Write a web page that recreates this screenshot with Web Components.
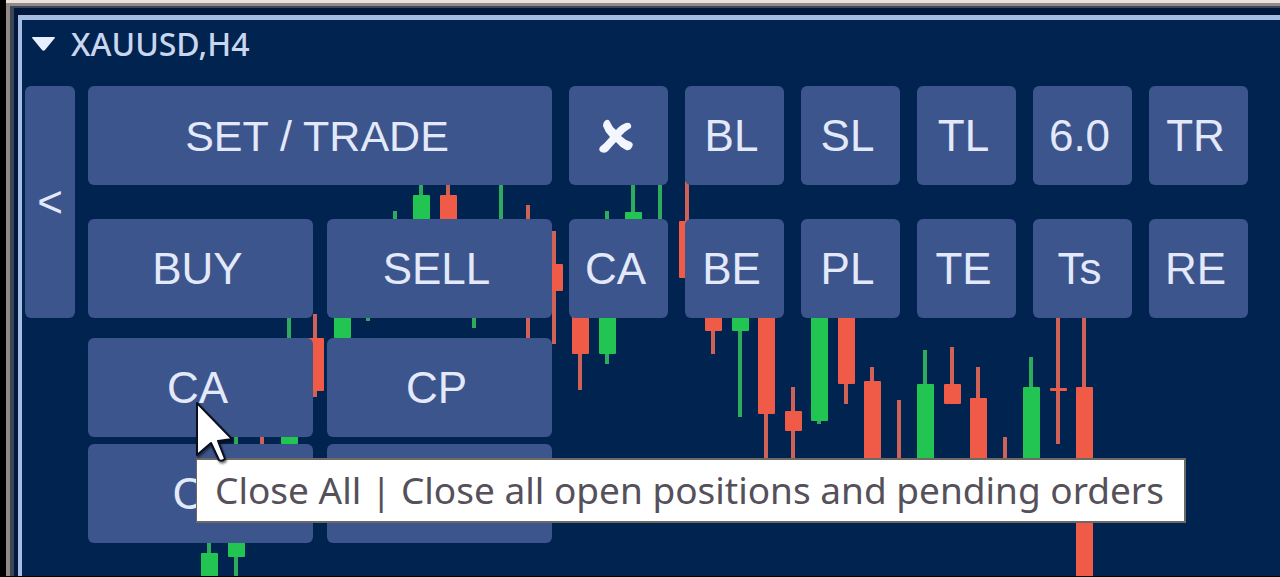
<!DOCTYPE html>
<html lang="en">
<head>
<meta charset="utf-8">
<title>XAUUSD,H4</title>
<style>
  html, body { margin: 0; height: 100%; background: #000; }
  body { overflow: hidden; font-family: "Liberation Sans", Arial, sans-serif; }
</style>
</head>
<body>
<chart-window heading="XAUUSD,H4">
  <candle-chart slot="chart"></candle-chart>
  <trade-panel></trade-panel>
  <tool-tip slot="overlay">Close All | Close all open positions and pending orders</tool-tip>
  <mouse-pointer slot="overlay"></mouse-pointer>
</chart-window>

<script>
class BaseElement extends HTMLElement {
  render(html) {
    this.attachShadow({ mode: "open" }).innerHTML = html;
  }
}

customElements.define("chart-window", class extends BaseElement {
  connectedCallback() {
    this.render(`
      <style>
        :host { display: block; position: relative; height: 100vh; overflow: hidden; box-sizing: border-box; padding: 0 0 1px 6px; background: #000; }
        .lip, .bevel, .inner, .pane { box-sizing: border-box; height: 100%; }
        .lip { background: #ebe2df; padding-top: 3px; }
        .bevel { border: solid #928a86; border-width: 3px 0 0 4px; }
        .inner { background: #00183d; border: solid #3c4654; border-width: 2px 0 0 4px; padding: 7px 0 0 4px; }
        .pane { background: #00234f; border: solid #a7bce3; border-width: 5px 0 0 4px; }
        header { position: relative; display: flex; align-items: center; gap: 16px; height: 48px; padding: 0 0 18px 10px; color: #c9d6ee; }
        h1 { margin: 0; font: 500 32px/48px "Noto Sans", sans-serif; }
        button { border: 0; padding: 0; background: none; display: flex; }
        main { position: relative; }
      </style>
      <div class="lip"><div class="bevel"><div class="inner"><div class="pane">
        <slot name="chart"></slot>
        <header>
          <button aria-label="Chart menu"><svg width="23" height="14" viewBox="0 0 23 14"><path d="M1 0H22Q24 0 22 2L13 13Q11.500 14.500 10 13L1 2Q-1 0 1 0Z" fill="#e8efff"/></svg></button>
          <h1></h1>
        </header>
        <main><slot></slot></main>
      </div></div></div></div>
      <slot name="overlay"></slot>`);
    this.shadowRoot.querySelector("h1").textContent = this.getAttribute("heading");
  }
});

customElements.define("candle-chart", class extends BaseElement {
  connectedCallback() {
    // centre, direction, high, low, body top, body bottom
    const data = [
      [209,1,540,577,553,577],[236,1,430,577,500,557],[262,0,430,450,0,0],[289,1,310,445,380,444],
      [315,0,314,397,338,391],[342,1,300,338,310,338],[368,1,300,321,0,0],[395,1,211,230,0,0],
      [421,1,180,230,195,225],[448,0,180,230,195,225],[474,1,300,328,0,0],[501,1,180,230,0,0],
      [528,0,205,345,0,0],[554,0,231,344,264,291],[580,0,310,390,310,354],[607,1,211,364,310,354],
      [633,1,180,230,212,230],[660,1,180,230,0,0],[687,0,181,278,221,278],[713,0,310,354,310,331],
      [740,1,310,417,310,331],[766,0,310,470,310,414],[793,0,387,470,411,431],[819,1,310,424,310,421],
      [846,0,310,404,310,384],[872,0,367,480,381,480],[899,0,400,480,0,0],[925,1,350,480,384,480],
      [952,0,347,404,384,404],[978,0,367,480,398,480],[1005,0,437,480,0,0],[1031,1,357,480,387,480],
      [1058,0,310,444,388,391],[1084,0,310,577,387,577]
    ];
    const bars = data.map(([x, up, hi, lo, t, b]) =>
      `<rect x="${x - 2}" y="${hi}" width="4" height="${lo - hi}" fill="${up ? "#2eac5c" : "#cf6157"}"/>` +
      (b ? `<rect x="${x - 8}" y="${t}" width="17" height="${b - t}" rx="1" fill="${up ? "#23c552" : "#f05b48"}"/>` : "")).join("");
    this.render(`
      <style>
        :host { position: absolute; inset: 0 0 1px 0; overflow: hidden; }
        svg { display: block; overflow: visible; }
      </style>
      <svg width="1280" height="577" role="img" aria-label="Candlestick chart">${bars}</svg>`);
  }
});

customElements.define("trade-button", class extends BaseElement {
  connectedCallback() {
    this.render(`
      <style>
        :host { display: block; min-width: 0; height: 99px; }
        :host([wide]) { grid-column: 1 / -1; }
        :host([tab]) { height: 232px; }
        button { display: flex; align-items: center; justify-content: center; box-sizing: border-box; width: 100%; height: 100%; border: 0; border-radius: 6px; padding: 0 6px 0 0; background: #3c558c; color: #e3e9fa; font: 400 44px/50px "Liberation Sans", Arial, sans-serif; white-space: nowrap; }
        :host([wide]) button { font-size: 43px; }
        :host([tab]) button { padding: 0; font-size: 44px; }
        :host([covered]) button { padding-right: 24px; }
      </style>
      <button><slot></slot></button>`);
    const label = this.getAttribute("label");
    if (label) this.shadowRoot.querySelector("button").setAttribute("aria-label", label);
  }
});

customElements.define("trade-panel", class extends BaseElement {
  connectedCallback() {
    const tiles = list => list.map(t => `<trade-button>${t}</trade-button>`).join("");
    const cross = `<svg width="34" height="34" viewBox="0 0 34 34" style="display:block" aria-hidden="true"><path d="M7 1Q10 0 11 3Q13 8 17 11Q21 6 27 4Q31 3 32 6Q33 9 30 10Q25 13 22 17Q26 21 32 23Q35 25 33 28Q31 32 27 31Q21 28 17 23Q13 27 9 32Q6 35 2 33Q-1 31 1 28Q6 24 11 18Q6 13 4 7Q4 3 7 1Z" fill="#f3f5ff"/></svg>`;
    this.render(`
      <style>
        :host { display: flex; align-items: flex-start; padding: 0 32px 0 3px; }
        .tab { flex: none; width: 50px; margin-right: 13px; }
        .orders { flex: 464 1 0; min-width: 0; display: flex; flex-direction: column; gap: 20px; margin-right: 17px; }
        .pair { display: grid; grid-template-columns: 1fr 1fr; gap: 34px 14px; }
        .pair.close { row-gap: 7px; }
        .tools { flex: 679 1 0; min-width: 0; display: grid; grid-template-columns: repeat(6, 1fr); gap: 34px 17px; }
      </style>
      <trade-button tab class="tab" label="Collapse">&lt;</trade-button>
      <div class="orders">
        <div class="pair"><trade-button wide>SET / TRADE</trade-button>${tiles(["BUY", "SELL"])}</div>
        <div class="pair close">${tiles(["CA", "CP"])}<trade-button covered>C</trade-button><trade-button></trade-button></div>
      </div>
      <div class="tools">
        <trade-button label="Close">${cross}</trade-button>${tiles(["BL", "SL", "TL", "6.0", "TR", "CA", "BE", "PL", "TE", "Ts", "RE"])}
      </div>`);
  }
});

customElements.define("tool-tip", class extends BaseElement {
  connectedCallback() {
    this.setAttribute("role", "tooltip");
    this.render(`
      <style>
        :host { position: absolute; left: 196px; top: 458px; box-sizing: border-box; height: 65px; padding: 0 20px 0 18px; border: 2px solid #6d6a66; border-left-width: 1px; background: #fff; color: #55505a; font: 400 37px/60px "Noto Sans", sans-serif; white-space: nowrap; }
      </style>
      <slot></slot>`);
  }
});

customElements.define("mouse-pointer", class extends BaseElement {
  connectedCallback() {
    this.render(`
      <style>
        :host { position: absolute; left: 192px; top: 396px; filter: drop-shadow(1px 2px 1px #0008); }
        svg { display: block; }
      </style>
      <svg width="44" height="70" viewBox="0 0 44 70" aria-hidden="true"><path d="M5 7V59L19 47L27 64Q30 66 33 63L26 45L40 43Z" fill="#fff" stroke="#0b1020" stroke-width="2" stroke-linejoin="round"/></svg>`);
  }
});
</script>
</body>
</html>
